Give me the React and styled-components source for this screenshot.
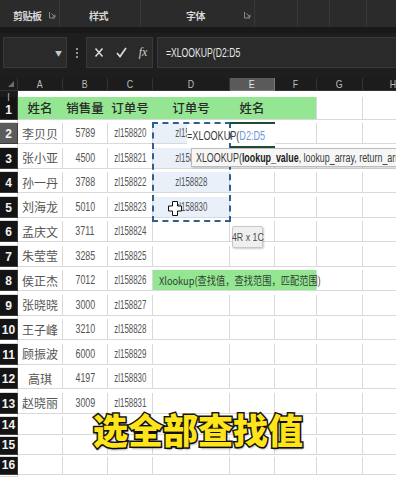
import React from 'react';
import styled, { createGlobalStyle } from 'styled-components';

const GlobalStyle = createGlobalStyle`
  html, body { margin: 0; padding: 0; background: #1b1b1b; }
  body { font-family: "Noto Sans CJK SC", "Noto Sans", sans-serif; overflow: hidden; }
`;

const Page = styled.div`
  position: relative;
  width: 396px;
  height: 477px;
  overflow: hidden;
  display: flex;
  flex-direction: column;
  background: #1c1c1c;
`;

// ---- ribbon strip
const Ribbon = styled.div`
  height: 27px;
  flex-shrink: 0;
  display: flex;
  background: #2b2b2b;
  border-bottom: 6px solid #191919;
  box-sizing: content-box;
`;

const RibbonGroup = styled.div`
  width: ${p => p.$w}px;
  flex-shrink: 0;
  box-sizing: border-box;
  display: flex;
  align-items: center;
  justify-content: ${p => (p.$launcher ? 'space-between' : 'center')};
  padding: 3px 3px 0 ${p => p.$pl || 0}px;
  border-right: 1px solid #383838;
`;

const RibbonLabel = styled.span`
  font-size: 10px;
  font-weight: 700;
  color: #d6d6d6;
  letter-spacing: -0.5px;
`;

const Launcher = () => (
  <svg width="7" height="8" viewBox="0 0 7 8">
    <path d="M0.5 1 V7 H6" fill="none" stroke="#8a8a8a" strokeWidth="1" />
    <path d="M2.5 2.5 L6 6 M6 3.6 V6 H3.6" fill="none" stroke="#8a8a8a" strokeWidth="1" />
  </svg>
);

// ---- formula bar
const FormulaArea = styled.div`
  height: 45px;
  flex-shrink: 0;
  box-sizing: border-box;
  display: flex;
  align-items: flex-start;
  padding: 4px 0 0 3px;
  background: #1e1e1e;
`;

const Box = styled.div`
  height: 31px;
  box-sizing: border-box;
  background: #2a2a2a;
  border: 1px solid #3a3a3a;
  display: flex;
  align-items: center;
`;

const NameBox = styled(Box)`
  width: 64px;
  justify-content: flex-end;
  padding-right: 4px;
  color: #c8c8c8;
  font-size: 7px;
`;

const Dots = styled.div`
  width: 19px;
  height: 31px;
  display: flex;
  flex-direction: column;
  align-items: center;
  justify-content: center;
  gap: 2px;
  span { width: 2px; height: 2px; background: #b8b8b8; border-radius: 1px; }
`;

const ActionBox = styled(Box)`
  width: 67px;
  display: grid;
  grid-template-columns: repeat(3, 22px);
  padding-left: 1px;
  justify-items: center;
`;

const Fx = styled.span`
  font-family: "Liberation Serif", serif;
  font-style: italic;
  font-size: 12px;
  color: #d0d0d0;
`;

const FormulaInput = styled(Box)`
  flex: 1;
  margin-left: 4px;
  padding-left: 8px;
  border-right: none;
  color: #e8e8e8;
  font-family: "Liberation Sans", Arial, sans-serif;
  font-size: 12px;
`;

const Narrow = styled.span`
  display: inline-block;
  white-space: nowrap;
  transform: scaleX(${p => p.$sx || 0.74});
  transform-origin: ${p => p.$origin || 'center'};
  font-family: "Liberation Sans", Arial, sans-serif;
`;

// ---- sheet grid
const Sheet = styled.div`
  position: relative;
  flex: 1;
  background: #ffffff;
`;

const Row = styled.div`
  display: grid;
  grid-template-columns: 18px 45px 45px 45px 77px 45px 42px 46px 60px;
  height: ${p => p.$h}px;
`;

const ColHead = styled.div`
  box-sizing: border-box;
  background: ${p => (p.$active ? '#5a5a5a' : '#1c1c1c')};
  border-right: 1px solid ${p => (p.$active ? '#7a7a7a' : '#333')};
  border-bottom: 1px solid ${p => (p.$active ? '#7a7a7a' : '#333')};
  color: ${p => (p.$active ? '#e6e6e6' : '#bdbdbd')};
  display: flex;
  align-items: center;
  justify-content: center;
  font-size: 11px;
`;

const Corner = styled(ColHead)`
  align-items: flex-end;
  justify-content: flex-end;
  padding: 0 3px 3px 0;
`;

const RowHead = styled.div`
  box-sizing: border-box;
  background: ${p => (p.$active ? '#5c5c5c' : '#141414')};
  border-bottom: 1px solid #3c3c3c;
  border-right: 1px solid #3c3c3c;
  color: #f2f2f2;
  font-family: "Liberation Sans", Arial, sans-serif;
  font-weight: 700;
  font-size: 12px;
  display: flex;
  align-items: flex-end;
  justify-content: center;
  padding-bottom: 2px;
`;

const Cell = styled.div`
  box-sizing: border-box;
  background: ${p => p.$bg || '#ffffff'};
  border-right: 1px solid ${p => (p.$joined ? p.$bg : '#d9d9d9')};
  border-bottom: 1px solid #d9d9d9;
  display: flex;
  align-items: center;
  justify-content: ${p => (p.$left ? 'flex-start' : 'center')};
  padding-left: ${p => (p.$left ? 6 : 0)}px;
  overflow: ${p => (p.$spill ? 'visible' : 'hidden')};
  white-space: nowrap;
  color: ${p => (p.$head ? '#2a2a2a' : '#555555')};
  font-size: ${p => (p.$head ? 12.5 : 12)}px;
  font-weight: ${p => (p.$head ? 500 : 400)};
  z-index: ${p => (p.$spill ? 1 : 0)};
`;

const NoteText = styled.span`
  display: inline-block;
  transform: scaleX(0.84);
  transform-origin: left;
  font-size: 11px;
  color: #2f3f2f;
`;

// ---- overlays on the grid
const Marquee = styled.div`
  position: absolute;
  left: 152px;
  top: 44px;
  width: 79px;
  height: 100px;
  box-sizing: border-box;
  border: 2px dashed #2f5f8c;
  z-index: 3;
`;

const ActiveEdge = styled.div`
  position: absolute;
  left: 230px;
  top: 44px;
  width: 45px;
  height: 26px;
  box-sizing: border-box;
  border-top: 2px solid #1e4d33;
  border-bottom: 2px solid #1e4d33;
  z-index: 4;
`;

const EditBox = styled.div`
  position: absolute;
  left: 187px;
  top: 46px;
  width: 88px;
  height: 22px;
  background: #ffffff;
  display: flex;
  align-items: center;
  font-size: 13px;
  color: #3a3a3a;
  z-index: 2;
`;

const Ref = styled.span`
  color: #6c95d6;
`;

const FuncTip = styled.div`
  position: absolute;
  left: 191px;
  top: 70px;
  width: 240px;
  height: 19px;
  box-sizing: border-box;
  background: #f6f6f6;
  border: 1px solid #bdbdbd;
  box-shadow: 1px 1px 2px rgba(0, 0, 0, 0.2);
  display: flex;
  align-items: center;
  padding-left: 4px;
  font-size: 12px;
  color: #3a3a3a;
  z-index: 5;
  b { font-weight: 700; color: #1a1a1a; }
`;

const SizeTip = styled.div`
  position: absolute;
  left: 232px;
  top: 148px;
  width: 31px;
  height: 22px;
  box-sizing: border-box;
  background: #efefef;
  border: 1px solid #c8c8c8;
  border-radius: 2px;
  box-shadow: 1px 1px 2px rgba(0, 0, 0, 0.2);
  display: flex;
  align-items: center;
  justify-content: center;
  font-size: 11px;
  color: #4a4a4a;
  z-index: 5;
`;

const Cursor = styled.svg`
  position: absolute;
  left: 168px;
  top: 123px;
  z-index: 6;
`;

const Caption = styled.div`
  position: absolute;
  left: 0;
  right: 0;
  top: 408px;
  text-align: center;
  font-size: 35px;
  line-height: 42px;
  font-weight: 900;
  color: #ffe41a;
  -webkit-text-stroke: 3px #151515;
  paint-order: stroke fill;
  text-shadow: 1px 2px 2px rgba(0, 0, 0, 0.5);
  z-index: 10;
`;

const XIcon = () => (
  <svg width="10" height="11" viewBox="0 0 10 11">
    <path d="M1.5 1.5 L8.5 9.5 M8.5 1.5 L1.5 9.5" stroke="#d8d8d8" strokeWidth="1.6" />
  </svg>
);

const CheckIcon = () => (
  <svg width="11" height="11" viewBox="0 0 11 11">
    <path d="M1 6 L4 9.5 L10 1" fill="none" stroke="#d8d8d8" strokeWidth="1.7" />
  </svg>
);

const people = [
  ['李贝贝', '5789'], ['张小亚', '4500'], ['孙一丹', '3788'], ['刘海龙', '5010'],
  ['孟庆文', '3711'], ['朱莹莹', '3285'], ['侯正杰', '7012'], ['张晓晓', '3000'],
  ['王子峰', '3210'], ['顾振波', '6000'], ['高琪', '4197'], ['赵晓丽', '3009'],
];

const lookups = { 2: 'zl158826', 3: 'zl158821', 4: 'zl158828', 5: 'zl158830' };
const GREEN = '#94e693';
const PICK = '#e9f0fa';
const letters = ['A', 'B', 'C', 'D', 'E', 'F', 'G', 'H', 'I'];

export default function App() {
  return (
    <Page>
      <GlobalStyle />
      <Ribbon>
        <RibbonGroup $w={60} $pl={13} $launcher>
          <RibbonLabel>剪贴板</RibbonLabel>
          <Launcher />
        </RibbonGroup>
        <RibbonGroup $w={81}>
          <RibbonLabel>样式</RibbonLabel>
        </RibbonGroup>
        <RibbonGroup $w={114} $pl={45} $launcher>
          <RibbonLabel>字体</RibbonLabel>
          <Launcher />
        </RibbonGroup>
        <RibbonGroup $w={43} />
        <RibbonGroup $w={32} />
        <RibbonGroup $w={37} />
        <RibbonGroup $w={40} />
      </Ribbon>

      <FormulaArea>
        <NameBox>▼</NameBox>
        <Dots><span /><span /><span /></Dots>
        <ActionBox>
          <XIcon />
          <CheckIcon />
          <Fx>fx</Fx>
        </ActionBox>
        <FormulaInput>
          <Narrow $sx={0.72} $origin="left">=XLOOKUP(D2:D5</Narrow>
        </FormulaInput>
      </FormulaArea>

      <Sheet>
        <Row $h={19}>
          <Corner>
            <svg width="6" height="6" viewBox="0 0 6 6"><path d="M6 0 V6 H0 Z" fill="#6a6a6a" /></svg>
          </Corner>
          {letters.map(l => (
            <ColHead key={l} $active={l === 'E'}>
              <Narrow $sx={0.8}>{l}</Narrow>
            </ColHead>
          ))}
        </Row>

        <Row $h={26}>
          <RowHead>1</RowHead>
          <Cell $bg={GREEN} $joined $head>姓名</Cell>
          <Cell $bg={GREEN} $joined $head>销售量</Cell>
          <Cell $bg={GREEN} $joined $head>订单号</Cell>
          <Cell $bg={GREEN} $joined $head>订单号</Cell>
          <Cell $bg={GREEN} $joined $head>姓名</Cell>
          <Cell $bg={GREEN} />
          <Cell />
          <Cell />
          <Cell />
        </Row>

        {people.map(([name, qty], i) => {
          const r = i + 2;
          return (
            <Row key={r} $h={i % 2 === 0 ? 25 : 24}>
              <RowHead $active={r === 2}>{r}</RowHead>
              <Cell>{name}</Cell>
              <Cell><Narrow>{qty}</Narrow></Cell>
              <Cell><Narrow $sx={0.66}>{`zl1588${20 + i}`}</Narrow></Cell>
              {r === 8 ? (
                <>
                  <Cell $bg={GREEN} $joined $left $spill>
                    <NoteText>Xlookup(查找值，查找范围，匹配范围)</NoteText>
                  </Cell>
                  <Cell $bg={GREEN} $joined />
                  <Cell $bg={GREEN} />
                </>
              ) : (
                <>
                  <Cell $bg={lookups[r] ? PICK : undefined}>
                    {lookups[r] && <Narrow $sx={0.66}>{lookups[r]}</Narrow>}
                  </Cell>
                  <Cell />
                  <Cell />
                </>
              )}
              <Cell />
              <Cell />
              <Cell />
            </Row>
          );
        })}

        {[14, 15, 16].map(r => (
          <Row key={r} $h={20}>
            <RowHead>{r}</RowHead>
            {letters.map(l => <Cell key={l} />)}
          </Row>
        ))}

        <Marquee />
        <ActiveEdge />
        <EditBox>
          <Narrow $sx={0.7} $origin="left">=XLOOKUP(<Ref>D2:D5</Ref></Narrow>
        </EditBox>
        <FuncTip>
          <Narrow $sx={0.74} $origin="left">
            XLOOKUP(<b>lookup_value</b>, lookup_array, return_array, [if_not_found])
          </Narrow>
        </FuncTip>
        <SizeTip><Narrow $sx={0.8}>4R x 1C</Narrow></SizeTip>
        <Cursor width="14" height="15" viewBox="0 0 14 15">
          <path d="M4.5 0.5 H9.5 V5 H13.5 V10 H9.5 V14.5 H4.5 V10 H0.5 V5 H4.5 Z" fill="#ffffff" stroke="#111" strokeWidth="1" />
        </Cursor>
      </Sheet>

      <Caption>选全部查找值</Caption>
    </Page>
  );
}
